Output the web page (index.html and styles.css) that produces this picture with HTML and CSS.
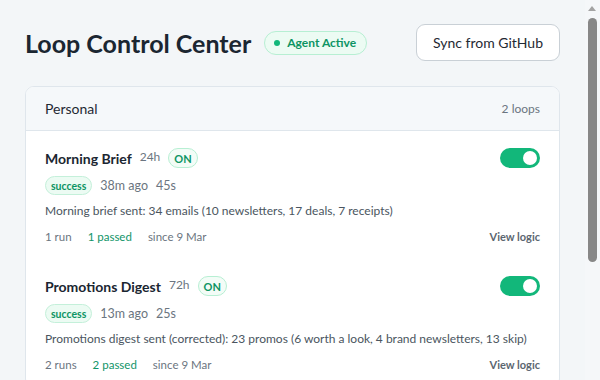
FILE: index.html
```html
<!DOCTYPE html>
<html>
<head>
<meta charset="utf-8">
<link rel="stylesheet" href="styles.css">
</head>
<body>
<div class="page">
  <header class="top">
    <div class="title-wrap">
      <h1 class="title">Loop Control Center</h1>
      <span class="agent"><span class="dot"></span>Agent Active</span>
    </div>
    <button class="sync">Sync from GitHub</button>
  </header>

  <section class="card">
    <div class="card-head">
      <span class="group">Personal</span>
      <span class="count">2 loops</span>
    </div>

    <div class="loop">
      <div class="loop-top">
        <div class="name-line">
          <span class="name">Morning Brief</span>
          <span class="freq">24h</span>
          <span class="on">ON</span>
        </div>
        <span class="toggle"><span class="knob"></span></span>
      </div>
      <div class="status-line">
        <span class="success">success</span>
        <span class="ago">38m ago</span>
        <span class="dur">45s</span>
      </div>
      <p class="desc">Morning brief sent: 34 emails (10 newsletters, 17 deals, 7 receipts)</p>
      <div class="meta">
        <div class="stats">
          <span>1 run</span>
          <span class="passed">1 passed</span>
          <span>since 9 Mar</span>
        </div>
        <a class="logic">View logic</a>
      </div>
    </div>

    <div class="loop">
      <div class="loop-top">
        <div class="name-line">
          <span class="name">Promotions Digest</span>
          <span class="freq">72h</span>
          <span class="on">ON</span>
        </div>
        <span class="toggle"><span class="knob"></span></span>
      </div>
      <div class="status-line">
        <span class="success">success</span>
        <span class="ago">13m ago</span>
        <span class="dur">25s</span>
      </div>
      <p class="desc">Promotions digest sent (corrected): 23 promos (6 worth a look, 4 brand newsletters, 13 skip)</p>
      <div class="meta">
        <div class="stats">
          <span>2 runs</span>
          <span class="passed">2 passed</span>
          <span>since 9 Mar</span>
        </div>
        <a class="logic">View logic</a>
      </div>
    </div>
  </section>
</div>
<div class="scrollbar">
  <span class="arrow"></span>
  <span class="thumb"></span>
</div>
</body>
</html>
```

FILE: styles.css
```css
html, body {
  margin: 0;
  padding: 0;
}
body {
  background: #f3f6f8;
  font-family: "Lato", "Noto Sans", sans-serif;
  color: #1f2933;
  padding-right: 15px;
}
.page {
  padding: 24px 25px 40px;
}
.top {
  display: flex;
  align-items: center;
  justify-content: space-between;
}
.title-wrap {
  display: flex;
  align-items: center;
  gap: 13px;
}
.title {
  margin: 0;
  font-size: 25px;
  font-weight: 700;
  color: #1b2631;
}
.agent {
  display: inline-flex;
  align-items: center;
  gap: 7px;
  height: 24px;
  box-sizing: border-box;
  padding: 0 10px 0 9px;
  border: 1px solid #b7efd3;
  background: #ecfbf3;
  border-radius: 13px;
  color: #0d9463;
  font-size: 12px;
  font-weight: 700;
}
.dot {
  width: 6px;
  height: 6px;
  border-radius: 50%;
  background: #12b77a;
}
.sync {
  height: 37px;
  padding: 0 16px;
  border: 1px solid #c9d0d6;
  background: #fff;
  border-radius: 9px;
  font-family: inherit;
  font-size: 14px;
  color: #1f2933;
}
.card {
  margin-top: 25px;
  background: #fff;
  border: 1px solid #dfe6ec;
  border-radius: 9px;
  overflow: hidden;
}
.card-head {
  display: flex;
  align-items: center;
  justify-content: space-between;
  height: 43px;
  padding: 0 19px;
  background: #f5f8fa;
  border-bottom: 1px solid #dfe6ec;
}
.group {
  font-size: 14px;
  color: #1f2933;
}
.count {
  font-size: 12px;
  color: #6b7580;
}
.loop {
  padding: 17px 19px 16px;
}
.loop-top {
  display: flex;
  align-items: center;
  justify-content: space-between;
  height: 20px;
}
.name-line {
  display: flex;
  align-items: center;
  gap: 8px;
}
.name {
  font-size: 14px;
  font-weight: 700;
  color: #1b2631;
}
.freq {
  font-size: 12px;
  color: #6b7580;
  margin-top: -4px;
}
.on {
  display: inline-flex;
  align-items: center;
  height: 20px;
  box-sizing: border-box;
  padding: 0 5px;
  border: 1px solid #b7efd3;
  background: #f3fcf7;
  border-radius: 10px;
  font-size: 11px;
  font-weight: 700;
  color: #0d9463;
}
.toggle {
  position: relative;
  width: 40px;
  height: 20px;
  border-radius: 10px;
  background: #12b77a;
}
.knob {
  position: absolute;
  top: 3px;
  right: 3px;
  width: 14px;
  height: 14px;
  border-radius: 50%;
  background: #fff;
}
.status-line {
  display: flex;
  align-items: center;
  gap: 8px;
  margin-top: 8px;
}
.success {
  display: inline-flex;
  align-items: center;
  height: 19px;
  box-sizing: border-box;
  padding: 0 5px;
  border: 1px solid #c4f0da;
  background: #ecfbf3;
  border-radius: 10px;
  font-size: 10.5px;
  font-weight: 700;
  color: #0d9463;
}
.ago {
  font-size: 12.5px;
  color: #6b7580;
}
.dur {
  font-size: 12.5px;
  color: #6b7580;
}
.desc {
  margin: 8px 0 0;
  font-size: 12px;
  color: #4a5560;
}
.meta {
  display: flex;
  align-items: center;
  justify-content: space-between;
  margin-top: 12px;
}
.stats {
  display: flex;
  gap: 16px;
  font-size: 11.5px;
  color: #6b7580;
}
.passed {
  color: #109468;
}
.logic {
  font-size: 11px;
  font-weight: 700;
  color: #5b6670;
}
.scrollbar {
  position: fixed;
  top: 0;
  right: 0;
  width: 15px;
  height: 100%;
  background: #f5f7f9;
}
.arrow {
  position: absolute;
  top: 6px;
  left: 3px;
  width: 0;
  height: 0;
  border-left: 4.5px solid transparent;
  border-right: 4.5px solid transparent;
  border-bottom: 5px solid #a3a3a3;
}
.thumb {
  position: absolute;
  top: 18px;
  left: 3px;
  width: 9px;
  height: 244px;
  border-radius: 5px;
  background: #878787;
}
```
